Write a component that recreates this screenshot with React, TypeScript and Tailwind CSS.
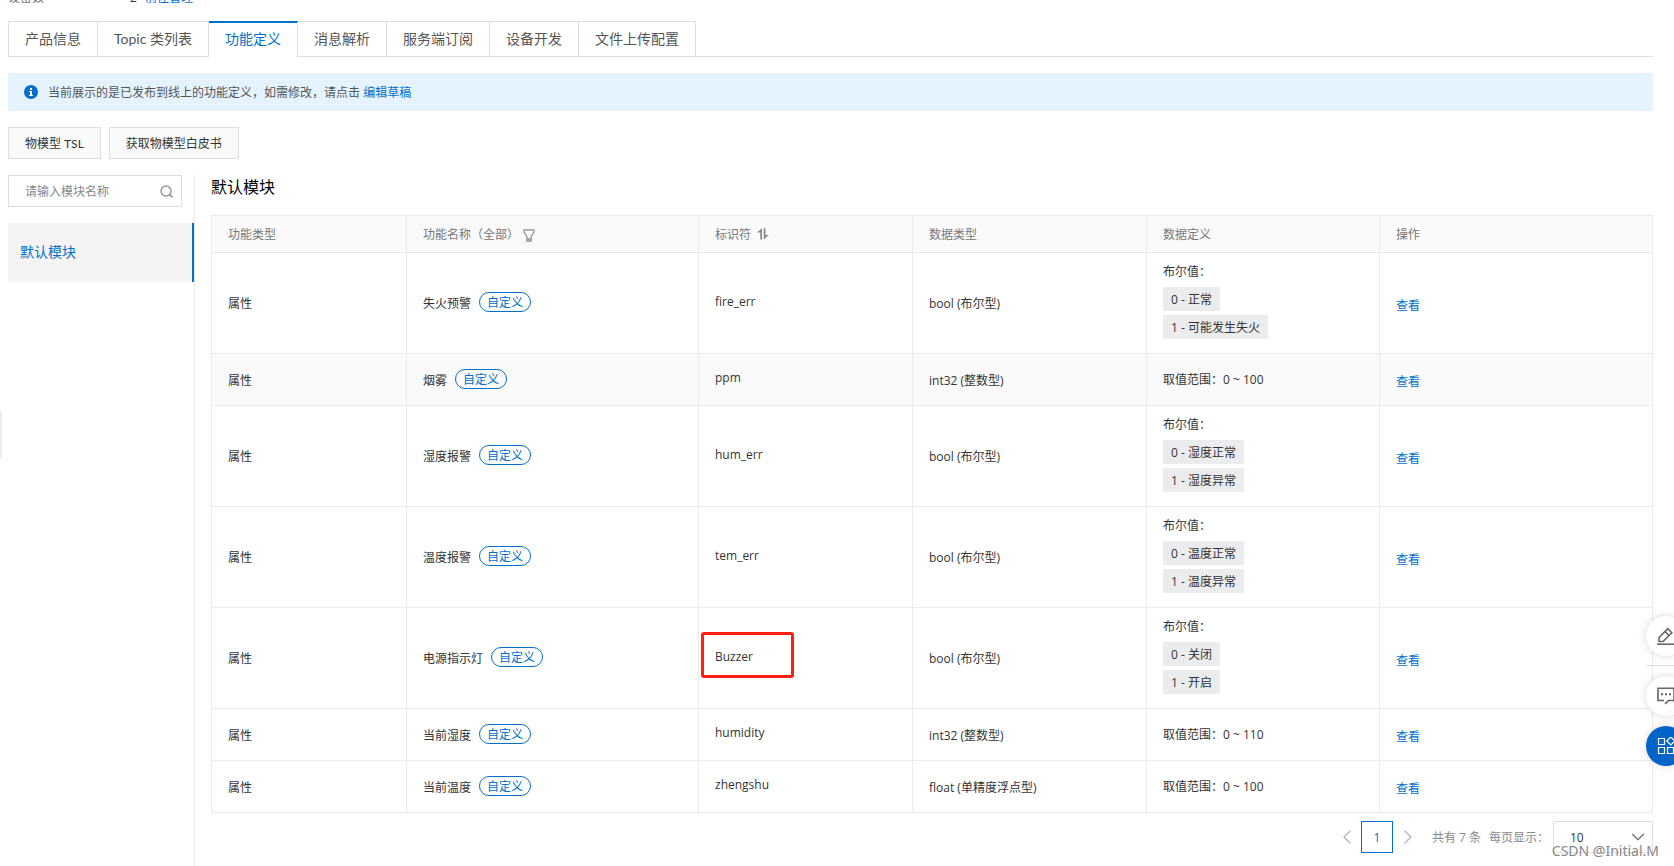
import { ReactNode } from 'react';
import { ChevronLeft, ChevronRight, ChevronDown } from 'lucide-react';

const tabs = ['产品信息', 'Topic 类列表', '功能定义', '消息解析', '服务端订阅', '设备开发', '文件上传配置'];

type Feature = {
  name: string;
  id: string;
  type: string;
  values?: string[];
  range?: string;
  hovered?: boolean;
  marked?: boolean;
};

const features: Feature[] = [
  { name: '失火预警', id: 'fire_err', type: 'bool (布尔型)', values: ['0 - 正常', '1 - 可能发生失火'] },
  { name: '烟雾', id: 'ppm', type: 'int32 (整数型)', range: '0 ~ 100', hovered: true },
  { name: '湿度报警', id: 'hum_err', type: 'bool (布尔型)', values: ['0 - 湿度正常', '1 - 湿度异常'] },
  { name: '温度报警', id: 'tem_err', type: 'bool (布尔型)', values: ['0 - 温度正常', '1 - 温度异常'] },
  { name: '电源指示灯', id: 'Buzzer', type: 'bool (布尔型)', values: ['0 - 关闭', '1 - 开启'], marked: true },
  { name: '当前湿度', id: 'humidity', type: 'int32 (整数型)', range: '0 ~ 110' },
  { name: '当前温度', id: 'zhengshu', type: 'float (单精度浮点型)', range: '0 ~ 100' },
];

function InfoIcon() {
  return (
    <svg className="size-[14px] shrink-0" viewBox="0 0 14 14" aria-hidden="true">
      <circle cx="7" cy="7" r="7" fill="#0070cc" />
      <path d="M6 3h2v2H6zM5 6h3v4h1v1H5v-1h1V7H5z" fill="#fff" />
    </svg>
  );
}

function SearchIcon() {
  return (
    <svg className="size-[13px]" viewBox="0 0 13 13" fill="none" stroke="#999" aria-hidden="true">
      <circle cx="6" cy="6" r="5" strokeWidth="1.5" />
      <path d="M9.500 9.500L12.400 12.400" strokeWidth="1.800" />
    </svg>
  );
}

function FilterIcon() {
  return (
    <svg className="h-[13px] w-[12px]" viewBox="0 0 12 13" fill="none" aria-hidden="true">
      <path d="M1 1h10v2L8.200 7.500V12H3.800V7.500L1 3z" stroke="#999" strokeWidth="1.400" />
      <path d="M3.800 9h4.400v3.500H3.800z" fill="#a5a5a5" />
    </svg>
  );
}

function SortIcon() {
  return (
    <svg className="h-[12px] w-[12px]" viewBox="0 0 12 12" fill="#888" aria-hidden="true">
      <path d="M5 .3V11.500H3.300V4.500H0z" />
      <path d="M6.700 .3H8.400V7H11.700L6.700 11.500z" />
    </svg>
  );
}

function HeadCell({ children, className }: { children: ReactNode; className?: string }) {
  return (
    <th className={`h-[37px] border-r border-b border-[#ebebeb] bg-[#fafafa] px-4 pt-0.5 text-left font-normal text-[#777] ${className ?? ''}`}>
      {children}
    </th>
  );
}

function FeatureRow({ item }: { item: Feature }) {
  const cell = 'border-r border-b border-[#ebebeb] px-4';
  return (
    <tr className={item.hovered ? 'bg-[#fafafa]' : 'bg-white'}>
      <td className={`${cell} h-[52px] pt-0.5`}>属性</td>
      <td className={`${cell} pb-0.5`}>
        <div className="flex items-center gap-2">
          <span className="pt-1">{item.name}</span>
          <span className="flex h-5 items-center rounded-full border border-[#0070cc] px-[7px] pt-0.5 text-[#0070cc]">自定义</span>
        </div>
      </td>
      <td className={`${cell} relative pb-[3px]`}>
        {item.id}
        {item.marked && (
          <span className="absolute top-6 left-0.5 h-[46px] w-[93px] rounded-[3px] border-3 border-[#ff1e10]" />
        )}
      </td>
      <td className={`${cell} pt-0.5`}>{item.type}</td>
      {item.values ? (
        <td className={`${cell} pt-2 pb-[14px]`}>
          <div className="leading-[22px]">布尔值：</div>
          {item.values.map((value) => (
            <div key={value} className="mt-1 flex">
              <span className="h-6 bg-[#ebecee] px-2 leading-[26px]">{value}</span>
            </div>
          ))}
        </td>
      ) : (
        <td className={cell}>取值范围：{item.range}</td>
      )}
      <td className={`${cell} pt-[5px]`}>
        <a href="#" className="text-[#0070cc]">查看</a>
      </td>
    </tr>
  );
}

function FeatureTable() {
  return (
    <table className="w-full table-fixed border-separate border-spacing-0 border-t border-l border-[#ebebeb]">
      <thead>
        <tr>
          <HeadCell className="w-[195px]">功能类型</HeadCell>
          <HeadCell className="w-[292px]">
            <div className="flex items-center gap-1">
              <span>功能名称（全部）</span>
              <button type="button" aria-label="筛选"><FilterIcon /></button>
            </div>
          </HeadCell>
          <HeadCell className="w-[214px]">
            <div className="flex items-center gap-1.5">
              <span>标识符</span>
              <button type="button" aria-label="排序" className="pb-0.5"><SortIcon /></button>
            </div>
          </HeadCell>
          <HeadCell className="w-[234px]">数据类型</HeadCell>
          <HeadCell className="w-[233px]">数据定义</HeadCell>
          <HeadCell>操作</HeadCell>
        </tr>
      </thead>
      <tbody>
        {features.map((item) => (
          <FeatureRow key={item.id} item={item} />
        ))}
      </tbody>
    </table>
  );
}

function Pagination() {
  return (
    <div className="mt-2 flex h-8 items-center justify-end text-[#888]">
      <button type="button" aria-label="上一页" className="mr-0.5 text-[#bbb]"><ChevronLeft size={24} strokeWidth={1.5} /></button>
      <button type="button" className="size-8 border border-[#0070cc] pt-0.5 text-[#0070cc]">1</button>
      <button type="button" aria-label="下一页" className="ml-[3px] text-[#bbb]"><ChevronRight size={24} strokeWidth={1.5} /></button>
      <span className="ml-3 pt-0.5">共有 7 条</span>
      <label htmlFor="page-size" className="ml-2 pt-0.5">每页显示：</label>
      <div className="relative ml-1 h-8 w-[100px]">
        <select id="page-size" className="h-full w-full appearance-none border border-[#dedede] bg-white px-4 pt-0.5 text-[#333]">
          <option>10</option>
        </select>
        <ChevronDown size={22} strokeWidth={1.5} className="pointer-events-none absolute top-[5px] right-1 text-[#777]" />
      </div>
    </div>
  );
}

function FloatingTools() {
  const round = 'flex size-10 items-center justify-center rounded-full shadow-[0_0_8px_rgba(0,0,0,0.15)]';
  return (
    <div className="absolute top-[616px] -right-3 flex flex-col items-center">
      <button type="button" aria-label="编辑" className={`${round} bg-white`}>
        <svg className="size-[18px]" viewBox="0 0 18 18" fill="none" stroke="#666" strokeWidth="1.6" aria-hidden="true">
          <path d="M2 14.500V10.500L10.800 1.700L14.800 5.700L6 14.500ZM8 4.500L12 8.500" />
          <path d="M0 17.200h18" />
        </svg>
      </button>
      <span className="mt-[9px] mb-[10px] h-px w-10 bg-[#ddd]" />
      <button type="button" aria-label="反馈" className={`${round} bg-white`}>
        <svg className="size-[18px]" viewBox="0 0 18 18" fill="none" stroke="#666" strokeWidth="1.6" aria-hidden="true">
          <path d="M7 13.500H1V1.200h16v12.300h-5.500L8 16.800" />
          <path d="M4 7.200h2M8 7.200h2M12 7.200h2" strokeWidth="2" />
        </svg>
      </button>
      <button type="button" aria-label="应用" className={`${round} mt-2.5 bg-[#0064c8]`}>
        <svg className="size-[18px]" viewBox="0 0 18 18" fill="none" stroke="#fff" strokeWidth="1.2" aria-hidden="true">
          <path d="M1.500 1.500h6v6h-6zM1.500 10.500h6v6h-6zM10.500 10.500h6v6h-6z" />
          <path d="M13.800 0L17.800 4L13.800 8L9.800 4Z" />
        </svg>
      </button>
    </div>
  );
}

export default function App() {
  return (
    <div className="relative flex min-h-screen flex-col overflow-hidden bg-white pr-[21px] pl-2 font-['Open_Sans','Noto_Sans_CJK_SC',sans-serif] text-xs text-[#333]">
      <div className="flex h-[21px] overflow-hidden">
        <div className="-mt-[11px] flex h-[18px] leading-[18px]">
          <span className="w-[122px] text-[#777]">设备数</span>
          <span className="w-[15px]">2</span>
          <a href="#" className="text-[#0070cc]">前往管理</a>
        </div>
      </div>

      <nav className="flex font-['Lato','Noto_Sans_CJK_SC',sans-serif] text-sm">
        {tabs.map((tab, i) => (
          <a
            key={tab}
            href="#"
            className={
              i === 2
                ? 'h-9 border-t-2 border-r border-t-[#0070cc] border-r-[#dedede] px-4 leading-8 text-[#0070cc]'
                : `h-9 border-y border-r border-[#dedede] px-4 leading-[34px] text-[#555] ${i === 0 ? 'border-l' : ''}`
            }
          >
            {tab}
          </a>
        ))}
        <span className="flex-1 border-b border-[#dedede]" />
      </nav>

      <div className="mt-4 flex h-[38px] items-center bg-[#e4f3fe] px-4 text-[#555]">
        <InfoIcon />
        <p className="ml-2.5 pt-0.5">
          当前展示的是已发布到线上的功能定义，如需修改，请点击 <a href="#" className="text-[#0070cc]">编辑草稿</a>
        </p>
      </div>

      <div className="mt-4 flex gap-2 font-['Lato','Noto_Sans_CJK_SC',sans-serif]">
        <button type="button" className="h-8 border border-[#dedede] bg-[#fafafa] px-4 pt-0.5">物模型 TSL</button>
        <button type="button" className="h-8 border border-[#dedede] bg-[#fafafa] px-4 pt-0.5">获取物模型白皮书</button>
      </div>

      <div className="mt-4 flex flex-1">
        <aside className="w-[187px] shrink-0 border-r border-[#ebebeb]">
          <div className="mr-3 flex h-8 items-center border border-[#dedede] pr-2 pl-4">
            <input
              type="text"
              aria-label="请输入模块名称"
              placeholder="请输入模块名称"
              className="min-w-0 flex-1 pt-0.5 outline-none placeholder:text-[#888]"
            />
            <button type="button" aria-label="搜索"><SearchIcon /></button>
          </div>
          <a href="#" className="mt-4 flex h-[59px] items-center border-r-2 border-[#0070cc] bg-[#f4f4f4] px-3 pb-0.5 text-sm text-[#0070cc]">
            默认模块
          </a>
        </aside>

        <main className="min-w-0 flex-1 pl-4">
          <h2 className="mb-4 h-6 text-base leading-6 text-black">默认模块</h2>
          <FeatureTable />
          <Pagination />
        </main>
      </div>

      <button type="button" aria-label="展开侧栏" className="absolute top-[411px] left-0 h-12 w-0.5 rounded-r-sm bg-[#ebebeb]" />
      <FloatingTools />
      <div className="pointer-events-none absolute right-[15px] bottom-[3px] font-['Noto_Sans',sans-serif] text-sm leading-6 text-[#888]">CSDN @Initial.M</div>
    </div>
  );
}
